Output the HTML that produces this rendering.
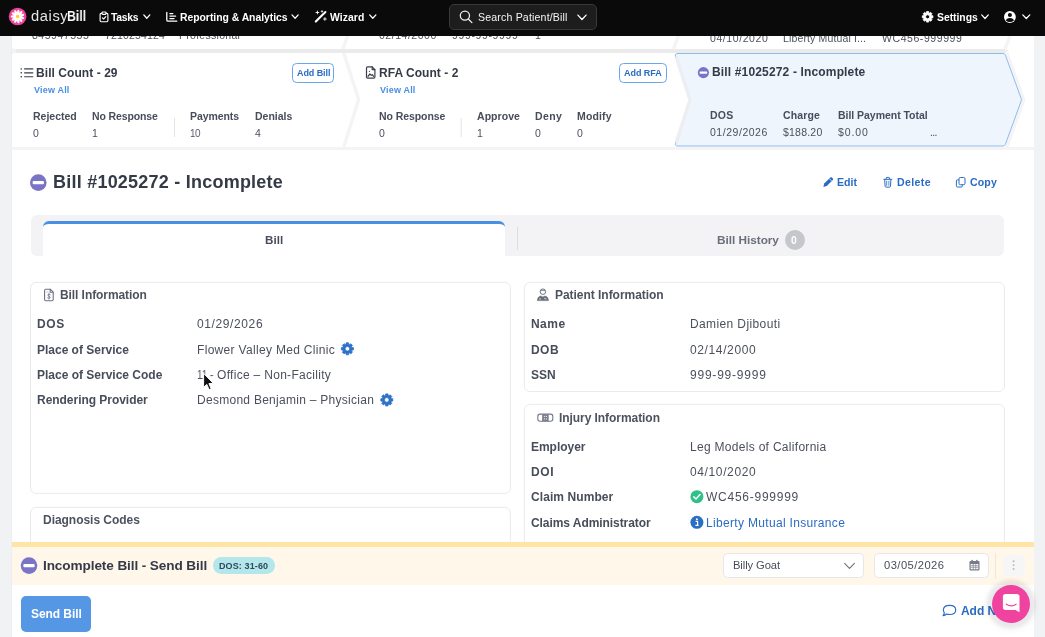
<!DOCTYPE html>
<html lang="en">
<head>
<meta charset="utf-8">
<title>Bill #1025272 - Incomplete</title>
<style>
html,body{margin:0;padding:0;}
body{width:1045px;height:637px;overflow:hidden;position:relative;background:#f1f2f4;font-family:"Liberation Sans",Arial,sans-serif;}
.t{position:absolute;white-space:pre;line-height:1;z-index:5;will-change:transform;}
.abs{position:absolute;}
#page{left:11.5px;top:36px;width:1022.6px;height:601px;background:#fff;z-index:0;}
#nav{left:0;top:0;width:1045px;height:36px;background:#0a0a0a;z-index:25;}
#search{left:449px;top:4px;width:148px;height:25.6px;border:1px solid #393939;background:#1d1d1d;border-radius:5px;box-sizing:border-box;z-index:26;}
svg{position:absolute;left:0;top:0;overflow:visible;}
.card{box-sizing:border-box;border:1px solid #e6e6e9;border-radius:6px;background:#fff;z-index:2;}
.btn-o{box-sizing:border-box;border:1px solid #6aa6ea;border-radius:4.5px;background:#fff;z-index:3;}
#tabbar{left:30.7px;top:215px;width:973.3px;height:40.8px;background:#f3f3f5;border-radius:6px;z-index:1;}
#tabactive{left:42.7px;top:221px;width:462.3px;height:34.8px;background:#fff;border-top:3px solid #4a90e2;border-radius:6px 6px 0 0;box-sizing:border-box;z-index:2;}
#tabdiv{left:517px;top:227px;width:1px;height:22.5px;background:#dddee2;z-index:2;}
#badge{left:784.8px;top:230px;width:19.8px;height:19.8px;border-radius:50%;background:#c6c7cc;z-index:2;}
#bar-y{left:11.5px;top:541.5px;width:1022.6px;height:5.5px;background:#fee5a5;z-index:15;}
#bar-p{left:11.5px;top:547px;width:1022.6px;height:37.6px;background:#fff7ea;z-index:15;}
#bar-w{left:11.5px;top:584.6px;width:1022.6px;height:53px;background:#fff;z-index:15;}
#dosbadge{left:213px;top:557.4px;width:61.8px;height:16.4px;border-radius:8.2px;background:#b4e7ec;z-index:16;}
.inp{box-sizing:border-box;border:1px solid #e7e7ea;border-radius:4.5px;background:#fff;z-index:16;}
#bardiv{left:995.3px;top:553px;width:1px;height:25.5px;background:#f2e7d4;z-index:16;}
#kebab{left:1002.8px;top:554.8px;width:22.2px;height:21.7px;border-radius:5px;background:#f6f6f7;z-index:16;}
#sendbtn{left:21px;top:596.1px;width:69.6px;height:35.5px;border-radius:5px;background:#5597e5;z-index:16;}
#chat{left:991.5px;top:584.5px;width:38.6px;height:38.6px;border-radius:50%;background:#f0439f;z-index:40;box-shadow:0 0 3px 6px rgba(60,60,80,0.055),0 1px 8px 4px rgba(40,40,60,0.07);}
</style>
</head>
<body>
<div id="page" class="abs"></div>

<!-- ============ card strip + misc shapes ============ -->
<svg width="1045" height="637" viewBox="0 0 1045 637" style="z-index:1">
  <!-- row gap -->
  <rect x="15.5" y="49" width="989.5" height="4" fill="#ebebeb"/>
  <path d="M12,48 L16,49.6 V52.4 L12,54Z" fill="#f3f3f5"/>
  <rect x="11" y="36" width="1" height="601" fill="#eceef2"/>
  <path d="M1005,49 L1009,51 L1005,53Z" fill="#efefef"/>
  <!-- under-strip faint band -->
  <rect x="11.5" y="147" width="1022.6" height="3" fill="#f4f4f5"/>
  <!-- row1 chevron lines (only lower part visible) -->
  <g stroke="#f4f4f6" stroke-width="3.4" fill="none" stroke-linejoin="round">
    <path d="M352,24 L342.8,49"/>
    <path d="M683,24 L673.5,49"/>
    <path d="M1014.5,24 L1005,49"/>
  </g>
  <!-- row2 chevron line card1|card2 and outer of active -->
  <g stroke="#f4f4f6" stroke-width="3.4" fill="none" stroke-linejoin="round">
    <path d="M343.8,53 L358.6,99.5 L343.8,147"/>
    <path d="M1006.8,53 L1023.6,99.7 L1006.8,147"/>
  </g>
  <!-- active (blue) card -->
  <path d="M678,53.5 L1003,53.5 Q1004.8,53.5 1005.4,55.2 L1021.2,98.6 Q1021.6,99.75 1021.2,100.9 L1005.4,144.3 Q1004.8,146 1003,146 L678,146 Q674.6,146 675.6,143.2 L689.8,100.9 Q690.2,99.75 689.8,98.6 L675.6,56.3 Q674.6,53.5 678,53.5Z" fill="#eef5fd" stroke="#8fbaee" stroke-width="1"/>
  <!-- card2|card3 chevron band drawn over the blue edge -->
  <path d="M676.2,57 L690,99.75 L676.2,142.5" stroke="#eceef2" stroke-width="3.4" fill="none" stroke-linejoin="round"/>
  <!-- dividers inside cards -->
  <rect x="174" y="118" width="1" height="19" fill="#e4e4e7"/>
  <rect x="460.7" y="118" width="1" height="19" fill="#e4e4e7"/>
  <circle cx="703.4" cy="72.6" r="5.6" fill="#7a74c7"/><rect x="699.592" y="71.39999999999999" width="7.616" height="2.4" rx="0.72" fill="#fff"/>
  <!-- list icon -->
  <g fill="none" stroke="#3a3f4b" stroke-width="1.15" stroke-linecap="round">
    <path d="M24.6,68.9 H32.8 M24.6,72.8 H32.8 M24.6,76.7 H32.8"/>
    <path d="M21.1,68.9 h0.3 M21.1,72.8 h0.3 M21.1,76.7 h0.3" stroke-width="1.4"/>
  </g>
  <!-- RFA doc icon -->
  <g fill="none" stroke="#3a3f4b" stroke-width="1.2" stroke-linejoin="round" stroke-linecap="round">
    <path d="M367.6,66.9 H372.2 L374.9,69.6 V77 Q374.9,78.1 373.8,78.1 H367.6 Q366.5,78.1 366.5,77 V68 Q366.5,66.9 367.6,66.9Z"/>
    <path d="M372.2,66.9 V69.6 H374.9"/>
    <path d="M368,76.3 L369.9,74 L371.3,75.4 L372.3,74.6 L373.6,76.3"/>
    <circle cx="369.4" cy="71.4" r="0.55" fill="#3a3f4b" stroke="none"/>
  </g>
</svg>

<div class="abs btn-o" style="left:291.8px;top:63.1px;width:42.7px;height:19.7px;"></div>
<div class="abs btn-o" style="left:619px;top:63.1px;width:47.7px;height:19.7px;"></div>

<!-- ============ main content shapes ============ -->
<div id="tabbar" class="abs"></div>
<div id="tabactive" class="abs"></div>
<div id="tabdiv" class="abs"></div>
<div id="badge" class="abs"></div>

<svg width="1045" height="637" viewBox="0 0 1045 637" style="z-index:2">
  <g fill="#fff" stroke="#e7e8eb" stroke-width="0.9">
    <rect x="30.5" y="282.4" width="479.9" height="211" rx="5.5"/>
    <rect x="30.5" y="507.4" width="479.9" height="80" rx="5.5"/>
    <rect x="524.4" y="282.4" width="480.1" height="109.1" rx="5.5"/>
    <rect x="524.4" y="404.4" width="480.1" height="180" rx="5.5"/>
  </g>
</svg>

<svg width="1045" height="637" viewBox="0 0 1045 637" style="z-index:4">
  <circle cx="38.3" cy="182.6" r="8.3" fill="#7a74c7"/><rect x="32.656" y="180.94" width="11.288000000000002" height="3.3200000000000003" rx="0.996" fill="#fff"/>
  <!-- edit pencil -->
  <g fill="#2a6cc4">
    <path d="M823.4,186.9 L824.2,183.6 L830.4,177.4 Q831.1,176.8 831.8,177.4 L832.9,178.5 Q833.5,179.2 832.9,179.9 L826.7,186.1Z"/>
  </g>
  <path d="M829.3,178.6 L831.8,181.1" stroke="#fff" stroke-width="0.7"/>
  <!-- trash -->
  <g fill="none" stroke="#2a6cc4" stroke-width="1" stroke-linecap="round" stroke-linejoin="round">
    <path d="M883.8,179.3 H891.8"/>
    <path d="M886.2,179.1 V178 Q886.2,177.4 886.8,177.4 H888.8 Q889.4,177.4 889.4,178 V179.1"/>
    <path d="M884.7,179.5 L885.1,186.2 Q885.2,187.1 886.1,187.1 H889.5 Q890.4,187.1 890.5,186.2 L890.9,179.5"/>
    <path d="M886.7,181.2 V185.3 M888.9,181.2 V185.3" stroke-width="0.8"/>
  </g>
  <!-- copy -->
  <g fill="none" stroke="#2a6cc4" stroke-width="1" stroke-linejoin="round">
    <rect x="959" y="177.5" width="6" height="7.2" rx="1.3"/>
    <path d="M959,179.8 H957.6 Q956.4,179.8 956.4,181 V185.8 Q956.4,187 957.6,187 H961.2 Q962.4,187 962.4,185.8 V184.7"/>
  </g>
  <!-- bill info doc icon -->
  <g fill="none" stroke="#6c7083" stroke-width="1.1" stroke-linejoin="round" stroke-linecap="round">
    <path d="M45.8,289.2 H50.2 L53.2,292.2 V299.5 Q53.2,300.7 52,300.7 H45.8 Q44.6,300.7 44.6,299.5 V290.4 Q44.6,289.2 45.8,289.2Z"/>
    <path d="M50.2,289.4 V292.2 H53"/>
    <path d="M46.7,292 H48.3" stroke-width="0.6" stroke="#9a9db0"/>
    <path d="M50.3,294.7 Q49.1,293.8 48,294.5 Q47.2,295.6 48.9,296.2 Q50.8,296.8 50,298 Q48.9,298.9 47.5,297.9 M48.95,293.4 V299.2" stroke-width="0.75"/>
  </g>
  <path d="M346.09,344.29 L346.21,342.82 L348.59,342.82 L348.71,344.29 L349.66,344.68 L350.79,343.73 L352.47,345.41 L351.52,346.54 L351.91,347.49 L353.38,347.61 L353.38,349.99 L351.91,350.11 L351.52,351.06 L352.47,352.19 L350.79,353.87 L349.66,352.92 L348.71,353.31 L348.59,354.78 L346.21,354.78 L346.09,353.31 L345.14,352.92 L344.01,353.87 L342.33,352.19 L343.28,351.06 L342.89,350.11 L341.42,349.99 L341.42,347.61 L342.89,347.49 L343.28,346.54 L342.33,345.41 L344.01,343.73 L345.14,344.68Z M345.10,348.80 a2.3,2.3 0 1,0 4.6,0 a2.3,2.3 0 1,0 -4.6,0Z" fill="#2e72c8" fill-rule="evenodd" stroke="#2e72c8" stroke-width="0.8" stroke-linejoin="round"/>
  <path d="M385.49,395.39 L385.61,393.92 L387.99,393.92 L388.11,395.39 L389.06,395.78 L390.19,394.83 L391.87,396.51 L390.92,397.64 L391.31,398.59 L392.78,398.71 L392.78,401.09 L391.31,401.21 L390.92,402.16 L391.87,403.29 L390.19,404.97 L389.06,404.02 L388.11,404.41 L387.99,405.88 L385.61,405.88 L385.49,404.41 L384.54,404.02 L383.41,404.97 L381.73,403.29 L382.68,402.16 L382.29,401.21 L380.82,401.09 L380.82,398.71 L382.29,398.59 L382.68,397.64 L381.73,396.51 L383.41,394.83 L384.54,395.78Z M384.50,399.90 a2.3,2.3 0 1,0 4.6,0 a2.3,2.3 0 1,0 -4.6,0Z" fill="#2e72c8" fill-rule="evenodd" stroke="#2e72c8" stroke-width="0.8" stroke-linejoin="round"/>
  <!-- patient icon -->
  <circle cx="542.9" cy="291.7" r="2.75" fill="none" stroke="#6a6e7a" stroke-width="0.95"/>
  <path d="M540.5,290.9 Q542.9,289.6 545.3,290.9" fill="none" stroke="#6a6e7a" stroke-width="0.8"/>
  <path d="M537.3,300.6 Q537.5,296.6 540.7,296 L542.9,297 L545.1,296 Q548.3,296.6 548.5,300.6Z" fill="#6a6e7a" stroke="#6a6e7a" stroke-width="0.6" stroke-linejoin="round"/>
  <path d="M539.2,299 H541 M544.2,298.2 L546.4,299.2" fill="none" stroke="#fff" stroke-width="0.75"/>
  <!-- injury icon (bandage) -->
  <rect x="537.8" y="414.1" width="15" height="7.2" rx="2.2" fill="none" stroke="#747889" stroke-width="1.1"/>
  <rect x="542.1" y="414.1" width="6.6" height="7.2" fill="#7b7f90"/>
  <g fill="#fff">
    <rect x="543.9" y="415.9" width="1" height="1"/><rect x="545.9" y="415.9" width="1" height="1"/>
    <rect x="543.9" y="418.4" width="1" height="1"/><rect x="545.9" y="418.4" width="1" height="1"/>
  </g>
  <!-- green check -->
  <circle cx="696.9" cy="496.7" r="6.5" fill="#2fc08b"/>
  <path d="M693.8,496.9 L696,499 L700,494.6" fill="none" stroke="#fff" stroke-width="1.5" stroke-linecap="round" stroke-linejoin="round"/>
  <!-- info circle -->
  <circle cx="696.9" cy="522.3" r="6.5" fill="#2a6fc4"/>
  <circle cx="696.9" cy="519.2" r="0.95" fill="#fff"/>
  <path d="M695.6,521.4 H697.6 V525.2 M695.4,525.4 H698.6" fill="none" stroke="#fff" stroke-width="1.2" stroke-linejoin="round"/>
</svg>

<!-- ============ bottom sticky bar ============ -->
<div id="bar-y" class="abs"></div>
<div id="bar-p" class="abs"></div>
<div id="bar-w" class="abs"></div>
<div id="dosbadge" class="abs"></div>
<div class="abs inp" style="left:723.1px;top:553.1px;width:140.7px;height:25.4px;"></div>
<div class="abs inp" style="left:873.7px;top:553.1px;width:115.2px;height:25.4px;"></div>
<div id="bardiv" class="abs"></div>
<div id="kebab" class="abs"></div>
<div id="sendbtn" class="abs"></div>
<svg width="1045" height="637" viewBox="0 0 1045 637" style="z-index:18">
  <circle cx="29" cy="565.6" r="8.3" fill="#7a74c7"/><rect x="23.355999999999998" y="563.94" width="11.288000000000002" height="3.3200000000000003" rx="0.996" fill="#fff"/>
  <path d="M844.6,563.4 L849.5,568.4 L854.4,563.4" fill="none" stroke="#6b6f7b" stroke-width="1.05" stroke-linecap="round" stroke-linejoin="round"/>
  <!-- calendar -->
  <g fill="#777b86">
    <path d="M970.6,561 H978.4 Q979.5,561 979.5,562.1 V569.4 Q979.5,570.5 978.4,570.5 H970.6 Q969.5,570.5 969.5,569.4 V562.1 Q969.5,561 970.6,561Z M970.7,564 V569.3 H978.3 V564Z" fill-rule="evenodd"/>
    <rect x="971.5" y="559.7" width="1.2" height="2.4" rx="0.5"/>
    <rect x="976.3" y="559.7" width="1.2" height="2.4" rx="0.5"/>
    <path d="M970.7,565.6 H978.3 V566.3 H970.7Z M970.7,567.4 H978.3 V568.1 H970.7Z M972.8,564 H973.5 V569.3 H972.8Z M975.5,564 H976.2 V569.3 H975.5Z"/>
  </g>
  <!-- kebab dots -->
  <g fill="#b3b4ba">
    <circle cx="1013.6" cy="561.3" r="0.95"/><circle cx="1013.6" cy="565.1" r="0.95"/><circle cx="1013.6" cy="568.9" r="0.95"/>
  </g>
  <!-- add note bubble -->
  <path d="M949.6,605.4 Q955.7,605.4 955.7,610 Q955.7,614.5 949.6,614.5 Q947.9,614.5 946.5,614 Q945,615.5 943.1,615.6 Q944.3,614.2 944.3,612.6 Q943.4,611.5 943.4,610 Q943.4,605.4 949.6,605.4Z" fill="none" stroke="#2a6cc4" stroke-width="1.15" stroke-linejoin="round"/>
</svg>

<!-- chat widget -->
<div id="chat" class="abs"></div>
<svg width="1045" height="637" viewBox="0 0 1045 637" style="z-index:41">
  <path d="M1005.6,593.9 H1016.8 Q1019.5,593.9 1019.5,596.6 V612.3 L1015.6,610 H1005.6 Q1002.9,610 1002.9,607.3 V596.6 Q1002.9,593.9 1005.6,593.9Z" fill="#fff"/>
  <path d="M1006.3,604.2 Q1011.2,607.6 1016.1,604.2" fill="none" stroke="#f0439f" stroke-width="1.2" stroke-linecap="round"/>
</svg>

<!-- ============ navbar ============ -->
<div id="nav" class="abs"></div>
<div id="search" class="abs"></div>
<svg width="1045" height="637" viewBox="0 0 1045 637" style="z-index:27">
  <!-- logo -->
  <circle cx="17.6" cy="16.5" r="8.8" fill="#f0449c"/>
  <g fill="#fff" transform="translate(17.6,16.5)">
    <ellipse rx="1.3" ry="3.0" cy="-3.9" transform="rotate(8.0)"/>
    <ellipse rx="1.3" ry="3.0" cy="-3.9" transform="rotate(40.7)"/>
    <ellipse rx="1.3" ry="3.0" cy="-3.9" transform="rotate(73.5)"/>
    <ellipse rx="1.3" ry="3.0" cy="-3.9" transform="rotate(106.2)"/>
    <ellipse rx="1.3" ry="3.0" cy="-3.9" transform="rotate(138.9)"/>
    <ellipse rx="1.3" ry="3.0" cy="-3.9" transform="rotate(171.6)"/>
    <ellipse rx="1.3" ry="3.0" cy="-3.9" transform="rotate(204.4)"/>
    <ellipse rx="1.3" ry="3.0" cy="-3.9" transform="rotate(237.1)"/>
    <ellipse rx="1.3" ry="3.0" cy="-3.9" transform="rotate(269.8)"/>
    <ellipse rx="1.3" ry="3.0" cy="-3.9" transform="rotate(302.5)"/>
    <ellipse rx="1.3" ry="3.0" cy="-3.9" transform="rotate(335.3)"/>
    <circle r="3"/>
  </g>
  <circle cx="17.6" cy="16.5" r="1.7" fill="#ffd21f"/>
  <!-- tasks clipboard -->
  <g fill="none" stroke="#fff" stroke-width="1.15" stroke-linejoin="round" stroke-linecap="round">
    <path d="M101.9,13.4 H101.2 Q100.1,13.4 100.1,14.5 V20.6 Q100.1,21.7 101.2,21.7 H106.8 Q107.9,21.7 107.9,20.6 V14.5 Q107.9,13.4 106.8,13.4 H106.1"/>
    <rect x="102" y="12" width="4" height="2.4" rx="0.8"/>
    <path d="M102.4,17.8 L103.6,19 L105.8,16.6"/>
  </g>
  <!-- reporting chart -->
  <g fill="none" stroke="#fff" stroke-width="1.3" stroke-linecap="round" stroke-linejoin="round">
    <path d="M166.8,12.4 V19.9 Q166.8,21.2 168.1,21.2 H176.8"/>
    <path d="M169.9,13.6 H172.8 M169.9,16.1 H175.6 M169.9,18.6 H174"/>
  </g>
  <!-- wizard wand -->
  <g fill="none" stroke="#fff" stroke-linecap="round" stroke-linejoin="round">
    <path d="M315.8,21.6 L323.3,14.1" stroke-width="2.1"/>
    <path d="M324.2,13.2 L325.4,12" stroke-width="2.1"/>
    <path d="M317.4,11.1 V13.9 M316,12.5 H318.8" stroke-width="0.9"/>
    <path d="M322,10.6 V12.2 M321.2,11.4 H322.8" stroke-width="0.8"/>
    <path d="M324.9,17.6 V20.4 M323.5,19 H326.3" stroke-width="0.9"/>
  </g>
  <path d="M143.8,14.9 L146.8,18.3 L149.8,14.9" fill="none" stroke="#fff" stroke-width="1.3" stroke-linecap="round" stroke-linejoin="round"/>
  <path d="M292,14.9 L295.1,18.3 L298.2,14.9" fill="none" stroke="#fff" stroke-width="1.3" stroke-linecap="round" stroke-linejoin="round"/>
  <path d="M369.7,14.9 L372.79999999999995,18.3 L375.9,14.9" fill="none" stroke="#fff" stroke-width="1.3" stroke-linecap="round" stroke-linejoin="round"/>
  <!-- search icon -->
  <circle cx="464.9" cy="15.6" r="4.6" fill="none" stroke="#f0f0f0" stroke-width="1.25"/>
  <path d="M468.3,19 L471.9,22.6" stroke="#f0f0f0" stroke-width="1.3" stroke-linecap="round"/>
  <path d="M577.9,15.1 L582.0,19.5 L586.1,15.1" fill="none" stroke="#fff" stroke-width="1.3" stroke-linecap="round" stroke-linejoin="round"/>
  <path d="M926.43,12.77 L926.55,11.50 L928.65,11.50 L928.77,12.77 L929.62,13.12 L930.60,12.31 L932.09,13.80 L931.28,14.78 L931.63,15.63 L932.90,15.75 L932.90,17.85 L931.63,17.97 L931.28,18.82 L932.09,19.80 L930.60,21.29 L929.62,20.48 L928.77,20.83 L928.65,22.10 L926.55,22.10 L926.43,20.83 L925.58,20.48 L924.60,21.29 L923.11,19.80 L923.92,18.82 L923.57,17.97 L922.30,17.85 L922.30,15.75 L923.57,15.63 L923.92,14.78 L923.11,13.80 L924.60,12.31 L925.58,13.12Z M925.60,16.80 a2.0,2.0 0 1,0 4.0,0 a2.0,2.0 0 1,0 -4.0,0Z" fill="#fff" fill-rule="evenodd" stroke="#fff" stroke-width="0.8" stroke-linejoin="round"/>
  <path d="M981.7,14.9 L985.0,18.5 L988.3,14.9" fill="none" stroke="#fff" stroke-width="1.3" stroke-linecap="round" stroke-linejoin="round"/>
  <!-- user -->
  <circle cx="1009.9" cy="17" r="5.9" fill="#fff"/>
  <circle cx="1009.9" cy="15" r="2.05" fill="#0a0a0a"/>
  <path d="M1005.9,20.4 Q1006.3,17.9 1009.9,17.9 Q1013.5,17.9 1013.9,20.4 Q1012.3,22 1009.9,22 Q1007.5,22 1005.9,20.4Z" fill="#0a0a0a"/>
  <path d="M1022.8,14.9 L1026.3,18.5 L1029.8,14.9" fill="none" stroke="#fff" stroke-width="1.3" stroke-linecap="round" stroke-linejoin="round"/>
</svg>

<!-- mouse cursor -->
<svg width="1045" height="637" viewBox="0 0 1045 637" style="z-index:50">
  <path d="M203.6,373.4 L203.6,387.4 L206.8,384.4 L209.1,389.6 L211.2,388.7 L208.9,383.6 L213.3,383.3Z" fill="#111" stroke="#fff" stroke-width="1" stroke-linejoin="round"/>
</svg>

<span class="t" style="left:30.66px;top:9px;font-size:14.7px;font-weight:400;color:#e6e6e6;letter-spacing:0.595px;z-index:30;">daisy</span>
<span class="t" style="left:67.36px;top:9px;font-size:14.7px;font-weight:700;color:#ffffff;letter-spacing:0.000px;transform:scaleX(0.8345);transform-origin:0 0;z-index:30;">Bill</span>
<span class="t" style="left:111.28px;top:13px;font-size:10.4px;font-weight:700;color:#ffffff;letter-spacing:-0.268px;z-index:30;">Tasks</span>
<span class="t" style="left:180.08px;top:13px;font-size:10.4px;font-weight:700;color:#ffffff;letter-spacing:-0.026px;z-index:30;">Reporting &amp; Analytics</span>
<span class="t" style="left:330.48px;top:13px;font-size:10.4px;font-weight:700;color:#ffffff;letter-spacing:0.073px;z-index:30;">Wizard</span>
<span class="t" style="left:478.27px;top:12px;font-size:10.6px;font-weight:400;color:#f4f4f4;letter-spacing:0.160px;z-index:30;">Search Patient/Bill</span>
<span class="t" style="left:936.58px;top:13px;font-size:10.4px;font-weight:700;color:#ffffff;letter-spacing:-0.038px;z-index:30;">Settings</span>
<span class="t" style="left:32.48px;top:30px;font-size:10.5px;font-weight:400;color:#4b505c;letter-spacing:0.535px;">845947555</span>
<span class="t" style="left:105.47px;top:30px;font-size:10.5px;font-weight:400;color:#4b505c;letter-spacing:0.159px;">7210254124</span>
<span class="t" style="left:179.47px;top:30px;font-size:10.5px;font-weight:400;color:#4b505c;letter-spacing:0.278px;">Professional</span>
<span class="t" style="left:378.78px;top:30px;font-size:10.5px;font-weight:400;color:#4b505c;letter-spacing:0.520px;">02/14/2000</span>
<span class="t" style="left:452.48px;top:30px;font-size:10.5px;font-weight:400;color:#4b505c;letter-spacing:0.628px;">999-99-9999</span>
<span class="t" style="left:534.98px;top:30px;font-size:10.5px;font-weight:400;color:#4b505c;letter-spacing:0.000px;">1</span>
<span class="t" style="left:709.98px;top:33px;font-size:10.5px;font-weight:400;color:#4b505c;letter-spacing:0.575px;">04/10/2020</span>
<span class="t" style="left:783.27px;top:33px;font-size:10.5px;font-weight:400;color:#4b505c;letter-spacing:0.139px;">Liberty Mutual I...</span>
<span class="t" style="left:881.68px;top:33px;font-size:10.5px;font-weight:400;color:#4b505c;letter-spacing:0.572px;">WC456-999999</span>
<span class="t" style="left:35.80px;top:67px;font-size:12px;font-weight:700;color:#353a47;letter-spacing:0.063px;">Bill Count - 29</span>
<span class="t" style="left:34.15px;top:86px;font-size:9px;font-weight:700;color:#4a90e2;letter-spacing:0.186px;">View All</span>
<span class="t" style="left:32.58px;top:111px;font-size:10.5px;font-weight:700;color:#484d5b;letter-spacing:-0.006px;">Rejected</span>
<span class="t" style="left:92.38px;top:111px;font-size:10.5px;font-weight:700;color:#484d5b;letter-spacing:-0.117px;">No Response</span>
<span class="t" style="left:190.47px;top:111px;font-size:10.5px;font-weight:700;color:#484d5b;letter-spacing:-0.081px;">Payments</span>
<span class="t" style="left:255.07px;top:111px;font-size:10.5px;font-weight:700;color:#484d5b;letter-spacing:-0.020px;">Denials</span>
<span class="t" style="left:32.58px;top:128px;font-size:10.5px;font-weight:400;color:#4b505c;letter-spacing:0.000px;">0</span>
<span class="t" style="left:92.38px;top:128px;font-size:10.5px;font-weight:400;color:#4b505c;letter-spacing:0.000px;">1</span>
<span class="t" style="left:255.07px;top:128px;font-size:10.5px;font-weight:400;color:#4b505c;letter-spacing:0.000px;">4</span>
<span class="t" style="left:190.47px;top:128px;font-size:10.5px;font-weight:400;color:#4b505c;letter-spacing:0.000px;transform:scaleX(0.8933);transform-origin:0 0;">10</span>
<span class="t" style="left:296.55px;top:69px;font-size:9px;font-weight:700;color:#2a6cc4;letter-spacing:-0.083px;">Add Bill</span>
<span class="t" style="left:379.00px;top:67px;font-size:12px;font-weight:700;color:#353a47;letter-spacing:0.039px;">RFA Count - 2</span>
<span class="t" style="left:380.05px;top:86px;font-size:9px;font-weight:700;color:#4a90e2;letter-spacing:0.186px;">View All</span>
<span class="t" style="left:378.78px;top:111px;font-size:10.5px;font-weight:700;color:#484d5b;letter-spacing:-0.077px;">No Response</span>
<span class="t" style="left:476.88px;top:111px;font-size:10.5px;font-weight:700;color:#484d5b;letter-spacing:0.058px;">Approve</span>
<span class="t" style="left:535.38px;top:111px;font-size:10.5px;font-weight:700;color:#484d5b;letter-spacing:0.418px;">Deny</span>
<span class="t" style="left:577.27px;top:111px;font-size:10.5px;font-weight:700;color:#484d5b;letter-spacing:0.142px;">Modify</span>
<span class="t" style="left:378.78px;top:128px;font-size:10.5px;font-weight:400;color:#4b505c;letter-spacing:0.000px;">0</span>
<span class="t" style="left:476.88px;top:128px;font-size:10.5px;font-weight:400;color:#4b505c;letter-spacing:0.000px;">1</span>
<span class="t" style="left:535.38px;top:128px;font-size:10.5px;font-weight:400;color:#4b505c;letter-spacing:0.000px;">0</span>
<span class="t" style="left:577.27px;top:128px;font-size:10.5px;font-weight:400;color:#4b505c;letter-spacing:0.000px;">0</span>
<span class="t" style="left:623.75px;top:69px;font-size:9px;font-weight:700;color:#2a6cc4;letter-spacing:-0.047px;">Add RFA</span>
<span class="t" style="left:711.80px;top:66px;font-size:12px;font-weight:700;color:#353a47;letter-spacing:0.154px;">Bill #1025272 - Incomplete</span>
<span class="t" style="left:710.38px;top:110px;font-size:10.5px;font-weight:700;color:#484d5b;letter-spacing:0.237px;">DOS</span>
<span class="t" style="left:783.27px;top:110px;font-size:10.5px;font-weight:700;color:#484d5b;letter-spacing:0.131px;">Charge</span>
<span class="t" style="left:838.08px;top:110px;font-size:10.5px;font-weight:700;color:#484d5b;letter-spacing:-0.036px;">Bill Payment Total</span>
<span class="t" style="left:710.38px;top:127px;font-size:10.5px;font-weight:400;color:#4b505c;letter-spacing:0.531px;">01/29/2026</span>
<span class="t" style="left:783.27px;top:127px;font-size:10.5px;font-weight:400;color:#4b505c;letter-spacing:0.212px;">$188.20</span>
<span class="t" style="left:838.08px;top:127px;font-size:10.5px;font-weight:400;color:#4b505c;letter-spacing:0.890px;">$0.00</span>
<span class="t" style="left:930.38px;top:127px;font-size:10.5px;font-weight:400;color:#4b505c;letter-spacing:-0.663px;">...</span>
<span class="t" style="left:52.70px;top:173px;font-size:18px;font-weight:700;color:#353a47;letter-spacing:0.229px;">Bill #1025272 - Incomplete</span>
<span class="t" style="left:837.47px;top:177px;font-size:10.6px;font-weight:700;color:#2a6cc4;letter-spacing:-0.023px;">Edit</span>
<span class="t" style="left:896.87px;top:177px;font-size:10.6px;font-weight:700;color:#2a6cc4;letter-spacing:0.350px;">Delete</span>
<span class="t" style="left:969.57px;top:177px;font-size:10.6px;font-weight:700;color:#2a6cc4;letter-spacing:0.121px;">Copy</span>
<span class="t" style="left:264.72px;top:234px;font-size:11.6px;font-weight:700;color:#484d5b;letter-spacing:0.027px;">Bill</span>
<span class="t" style="left:716.61px;top:235px;font-size:11.8px;font-weight:700;color:#6b6f7b;letter-spacing:-0.031px;">Bill History</span>
<span class="t" style="left:791.18px;top:236px;font-size:10.4px;font-weight:700;color:#ffffff;letter-spacing:0.000px;">0</span>
<span class="t" style="left:59.70px;top:289px;font-size:12px;font-weight:700;color:#4d525f;letter-spacing:-0.076px;">Bill Information</span>
<span class="t" style="left:37.30px;top:318px;font-size:12px;font-weight:700;color:#484d5b;letter-spacing:0.572px;">DOS</span>
<span class="t" style="left:37.30px;top:344px;font-size:12px;font-weight:700;color:#484d5b;letter-spacing:-0.014px;">Place of Service</span>
<span class="t" style="left:37.30px;top:369px;font-size:12px;font-weight:700;color:#484d5b;letter-spacing:-0.002px;">Place of Service Code</span>
<span class="t" style="left:37.30px;top:394px;font-size:12px;font-weight:700;color:#484d5b;letter-spacing:-0.035px;">Rendering Provider</span>
<span class="t" style="left:196.90px;top:318px;font-size:12px;font-weight:400;color:#4b505c;letter-spacing:0.611px;">01/29/2026</span>
<span class="t" style="left:196.90px;top:344px;font-size:12px;font-weight:400;color:#4b505c;letter-spacing:0.316px;">Flower Valley Med Clinic</span>
<span class="t" style="left:196.90px;top:394px;font-size:12px;font-weight:400;color:#4b505c;letter-spacing:0.275px;">Desmond Benjamin – Physician</span>
<span class="t" style="left:196.90px;top:369px;font-size:12px;font-weight:400;color:#4b505c;letter-spacing:0.000px;transform:scaleX(0.8264);transform-origin:0 0;">11 -</span>
<span class="t" style="left:216.60px;top:369px;font-size:12px;font-weight:400;color:#4b505c;letter-spacing:0.302px;">Office – Non-Facility</span>
<span class="t" style="left:554.90px;top:289px;font-size:12px;font-weight:700;color:#4d525f;letter-spacing:-0.038px;">Patient Information</span>
<span class="t" style="left:530.60px;top:318px;font-size:12px;font-weight:700;color:#484d5b;letter-spacing:0.457px;">Name</span>
<span class="t" style="left:530.60px;top:344px;font-size:12px;font-weight:700;color:#484d5b;letter-spacing:0.444px;">DOB</span>
<span class="t" style="left:530.60px;top:369px;font-size:12px;font-weight:700;color:#484d5b;letter-spacing:-0.064px;">SSN</span>
<span class="t" style="left:690.30px;top:318px;font-size:12px;font-weight:400;color:#4b505c;letter-spacing:0.383px;">Damien Djibouti</span>
<span class="t" style="left:690.30px;top:344px;font-size:12px;font-weight:400;color:#4b505c;letter-spacing:0.622px;">02/14/2000</span>
<span class="t" style="left:690.30px;top:369px;font-size:12px;font-weight:400;color:#4b505c;letter-spacing:0.780px;">999-99-9999</span>
<span class="t" style="left:559.20px;top:412px;font-size:12px;font-weight:700;color:#4d525f;letter-spacing:-0.061px;">Injury Information</span>
<span class="t" style="left:530.60px;top:441px;font-size:12px;font-weight:700;color:#484d5b;letter-spacing:-0.032px;">Employer</span>
<span class="t" style="left:530.60px;top:466px;font-size:12px;font-weight:700;color:#484d5b;letter-spacing:0.608px;">DOI</span>
<span class="t" style="left:530.60px;top:491px;font-size:12px;font-weight:700;color:#484d5b;letter-spacing:0.082px;">Claim Number</span>
<span class="t" style="left:530.60px;top:517px;font-size:12px;font-weight:700;color:#484d5b;letter-spacing:-0.066px;">Claims Administrator</span>
<span class="t" style="left:690.30px;top:441px;font-size:12px;font-weight:400;color:#4b505c;letter-spacing:0.298px;">Leg Models of California</span>
<span class="t" style="left:690.30px;top:466px;font-size:12px;font-weight:400;color:#4b505c;letter-spacing:0.622px;">04/10/2020</span>
<span class="t" style="left:705.80px;top:491px;font-size:12px;font-weight:400;color:#4b505c;letter-spacing:0.745px;">WC456-999999</span>
<span class="t" style="left:705.80px;top:517px;font-size:12px;font-weight:400;color:#2a6cc4;letter-spacing:0.324px;">Liberty Mutual Insurance</span>
<span class="t" style="left:43.30px;top:514px;font-size:12px;font-weight:700;color:#4d525f;letter-spacing:-0.036px;">Diagnosis Codes</span>
<span class="t" style="left:42.92px;top:559px;font-size:13.6px;font-weight:700;color:#353a47;letter-spacing:-0.105px;z-index:20;">Incomplete Bill - Send Bill</span>
<span class="t" style="left:219.15px;top:562px;font-size:9px;font-weight:700;color:#2f4858;letter-spacing:0.110px;z-index:20;">DOS: 31-60</span>
<span class="t" style="left:733.14px;top:560px;font-size:11.2px;font-weight:400;color:#484d5b;letter-spacing:-0.087px;z-index:20;">Billy Goat</span>
<span class="t" style="left:883.64px;top:560px;font-size:11.2px;font-weight:400;color:#484d5b;letter-spacing:0.444px;z-index:20;">03/05/2026</span>
<span class="t" style="left:30.90px;top:608px;font-size:12px;font-weight:700;color:#ffffff;letter-spacing:-0.073px;z-index:20;">Send Bill</span>
<span class="t" style="left:961.00px;top:605px;font-size:12px;font-weight:700;color:#2a6cc4;letter-spacing:-0.053px;z-index:20;">Add Note</span>
</body>
</html>
